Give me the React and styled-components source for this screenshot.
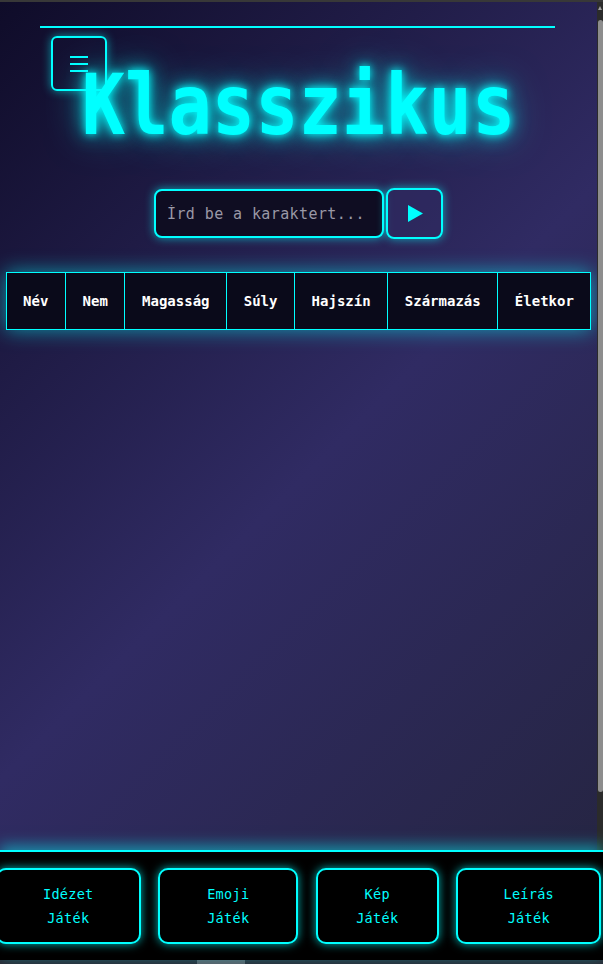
import React from 'react';
import styled, { createGlobalStyle } from 'styled-components';

const cyan = '#00ffff';

const GlobalStyle = createGlobalStyle`
  html, body {
    margin: 0;
    padding: 0;
    height: 100%;
    overflow: hidden;
    background: #383838;
  }
  * {
    box-sizing: border-box;
  }
`;

const Shell = styled.div`
  position: relative;
  width: 603px;
  height: 964px;
  border-top: 2px solid #383838;
  display: flex;
  flex-direction: column;
  font-family: 'DejaVu Sans Mono', monospace;
`;

const Viewport = styled.div`
  display: flex;
  height: 958px;
`;

const Frame = styled.div`
  width: 597px;
  height: 958px;
  overflow: hidden;
  background: linear-gradient(135deg, #0f0c29 0%, #302b63 50%, #24243e 100%);
`;

// fake vertical scrollbar rail, drawn to match the browser chrome in the shot
const VScroll = styled.div`
  position: relative;
  width: 6px;
  background: #2b2b2b;

  &::before {
    content: '';
    position: absolute;
    top: 4px;
    left: 1px;
    border-left: 2px solid transparent;
    border-right: 2px solid transparent;
    border-bottom: 4px solid #a0a0a0;
  }

  span {
    position: absolute;
    top: 18px;
    left: 1px;
    width: 5px;
    height: 772px;
    border-radius: 3px;
    background: #8d8d8d;
  }
`;

const Main = styled.main`
  position: relative;
  display: flex;
  flex-direction: column;
  align-items: center;
  padding-top: 24px;
`;

const TopLine = styled.div`
  align-self: stretch;
  margin: 0 42px 0 40px;
  border-top: 2px solid ${cyan};
`;

const MenuButton = styled.button`
  position: absolute;
  top: 34px;
  left: 51px;
  width: 56px;
  height: 55px;
  border: 2px solid ${cyan};
  border-radius: 6px;
  background: transparent;
  box-shadow: 0 0 10px rgba(0, 255, 255, 0.55);
  display: flex;
  align-items: center;
  justify-content: center;
  padding: 0;
  z-index: 2;
`;

const Title = styled.h1`
  margin: 41px 0 0;
  font-family: 'DejaVu Sans Mono', monospace;
  font-size: 72px;
  line-height: 72px;
  font-weight: bold;
  color: ${cyan};
  transform: scaleY(1.15);
  text-shadow: 0 0 8px ${cyan}, 0 0 18px rgba(0, 255, 255, 0.8), 0 0 36px rgba(0, 255, 255, 0.5);
`;

const SearchRow = styled.div`
  margin-top: 47px;
  display: flex;
  align-items: center;
  gap: 2px;
`;

const SearchInput = styled.input`
  width: 230px;
  height: 49px;
  padding: 0 11px;
  border: 2px solid ${cyan};
  border-radius: 8px;
  background: #0f0d22;
  color: #e0e0e0;
  font-family: 'DejaVu Sans Mono', monospace;
  font-size: 15px;
  letter-spacing: 0.4px;
  box-shadow: 0 0 10px rgba(0, 255, 255, 0.6);
  outline: none;

  &::placeholder {
    color: #9a98a6;
  }
`;

const PlayButton = styled.button`
  width: 57px;
  height: 51px;
  border: 2px solid ${cyan};
  border-radius: 8px;
  background: rgba(48, 43, 99, 0.6);
  box-shadow: 0 0 10px rgba(0, 255, 255, 0.6);
  display: flex;
  align-items: center;
  justify-content: center;
  padding: 0;
`;

const Table = styled.table`
  margin-top: 33px;
  border-collapse: collapse;
  background: #0a0a1a;
  box-shadow: 0 0 20px rgba(0, 255, 255, 0.55);
`;

const Th = styled.th`
  padding: 20px 16.6px;
  border: 1px solid ${cyan};
  color: #ffffff;
  font-family: 'DejaVu Sans Mono', monospace;
  font-size: 14px;
  line-height: 16px;
  font-weight: bold;
  white-space: nowrap;
`;

const Nav = styled.nav`
  position: absolute;
  left: 0;
  right: 0;
  bottom: 4px;
  height: 110px;
  padding: 16px 6px 0 0;
  background: #000;
  border-top: 2px solid ${cyan};
  box-shadow: 0 -4px 14px rgba(0, 255, 255, 0.5);
  display: flex;
  justify-content: center;
  align-items: flex-start;
  gap: 17.5px;
  overflow: hidden;
  z-index: 3;
`;

const GameButton = styled.button`
  flex: 0 0 ${p => p.$w}px;
  height: 76px;
  padding: 12px 8px;
  border: 2px solid ${cyan};
  border-radius: 10px;
  background: #000;
  color: ${cyan};
  font-family: 'DejaVu Sans Mono', monospace;
  font-size: 13.5px;
  line-height: 24px;
  letter-spacing: 0.3px;
  box-shadow: 0 0 10px rgba(0, 255, 255, 0.7);
  display: flex;
  flex-direction: column;
  align-items: center;
`;

const HScroll = styled.div`
  position: relative;
  height: 4px;
  background: #2b2732;

  span {
    position: absolute;
    left: 197px;
    top: 0;
    width: 48px;
    height: 4px;
    background: #5c5a63;
  }
`;

const columns = ['Név', 'Nem', 'Magasság', 'Súly', 'Hajszín', 'Származás', 'Életkor'];

const games = [
  { name: 'Idézet', width: 145 },
  { name: 'Emoji', width: 140 },
  { name: 'Kép', width: 123 },
  { name: 'Leírás', width: 145 },
];

const MenuIcon = () => (
  <svg width="20" height="18" viewBox="0 0 20 18">
    <g stroke={cyan} strokeWidth="2">
      <line x1="1" y1="2" x2="19" y2="2" />
      <line x1="1" y1="9" x2="19" y2="9" />
      <line x1="1" y1="16" x2="19" y2="16" />
    </g>
  </svg>
);

export default function App() {
  return (
    <>
      <GlobalStyle />
      <Shell>
        <Viewport>
          <Frame>
            <Main>
              <TopLine />
              <MenuButton aria-label="menu">
                <MenuIcon />
              </MenuButton>
              <Title>Klasszikus</Title>
              <SearchRow>
                <SearchInput placeholder="Írd be a karaktert..." />
                <PlayButton aria-label="küldés">
                  <svg width="16" height="17" viewBox="0 0 16 17">
                    <polygon points="1,0 16,8.5 1,17" fill={cyan} />
                  </svg>
                </PlayButton>
              </SearchRow>
              <Table>
                <thead>
                  <tr>
                    {columns.map(c => (
                      <Th key={c}>{c}</Th>
                    ))}
                  </tr>
                </thead>
              </Table>
            </Main>
          </Frame>
          <VScroll>
            <span />
          </VScroll>
        </Viewport>
        <Nav>
          {games.map(g => (
            <GameButton key={g.name} $w={g.width}>
              <span>{g.name}</span>
              <span>Játék</span>
            </GameButton>
          ))}
        </Nav>
        <HScroll>
          <span />
        </HScroll>
      </Shell>
    </>
  );
}
